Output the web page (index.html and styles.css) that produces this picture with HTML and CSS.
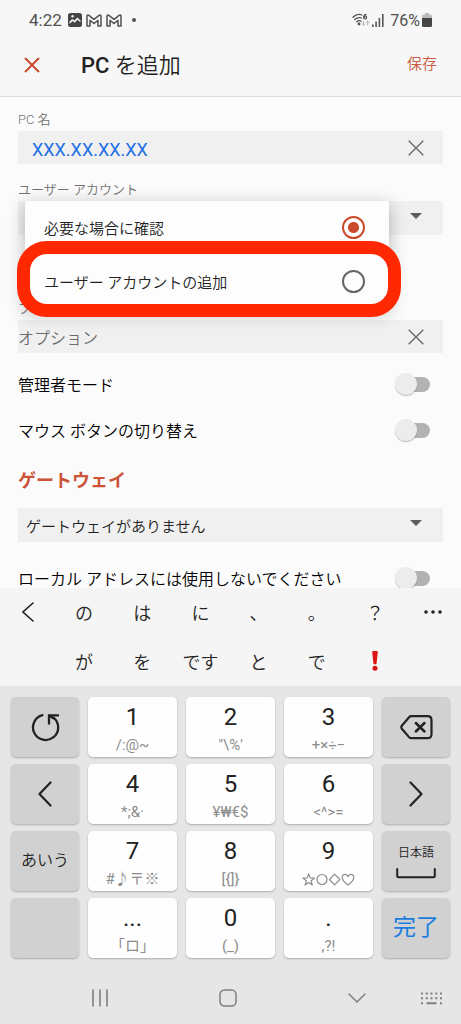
FILE: index.html
```html
<!DOCTYPE html>
<html lang="ja">
<head>
<meta charset="utf-8">
<meta name="viewport" content="width=device-width, initial-scale=1">
<title>PC を追加</title>
<link rel="stylesheet" href="styles.css">
</head>
<body>
<header class="top">
  <div class="status">
    <div class="status-left">
      <span class="clock">4:22</span>
      <svg width="14" height="14" viewBox="0 0 14 14"><rect x="0" y="0" width="14" height="14" rx="2.500" fill="#454545"/><path d="M1.500 11V8.500L4.300 6l2.200 1.600L9.300 4.500l3.200 3v1.700L9.500 6.800 6.700 9.700 4.500 8z" fill="#f7f7f7"/><circle cx="4.500" cy="3.300" r="1.200" fill="#f7f7f7"/></svg>
      <svg width="16" height="13" viewBox="0 0 16 13"><path d="M1 12V2.200Q1 .4 2.600 1.200L8 5.300l5.400-4.100Q15 .4 15 2.200V12h-3V6.400L8 9.500 4 6.400V12z" fill="none" stroke="#505050" stroke-width="1.500" stroke-linejoin="round"/></svg>
      <svg width="16" height="13" viewBox="0 0 16 13"><path d="M1 12V2.200Q1 .4 2.600 1.200L8 5.300l5.400-4.100Q15 .4 15 2.200V12h-3V6.400L8 9.500 4 6.400V12z" fill="none" stroke="#505050" stroke-width="1.500" stroke-linejoin="round"/></svg>
      <span class="dot"></span>
    </div>
    <div class="status-right">
      <svg width="18" height="14" viewBox="0 0 18 14" fill="none" stroke="#555" stroke-width="1.300" stroke-linecap="round"><path d="M1 4.200C3.500 1.600 7 1 10 2M2.800 6.500C5 4.500 7.500 4.200 9.600 5M4.700 8.700c1.500-1.200 3-1.300 4.500-.5"/><circle cx="7" cy="11" r=".8" fill="#555"/><path d="M14 1.500c-1.700.4-2.200 1.800-2.200 3"/><circle cx="13.200" cy="4.500" r="1.400"/><path d="M11.500 8v4m-1.300-1.200l1.300 1.400 1.300-1.400M15.700 12.300v-4m-1.300 1.200l1.300-1.400L17 9.500" stroke="#b5b5b5" stroke-width="1"/></svg>
      <svg width="12" height="13" viewBox="0 0 12 13" fill="#555"><rect x="0" y="10.500" width="1.600" height="2.500"/><rect x="3.300" y="7.500" width="1.600" height="5.500"/><rect x="6.600" y="4" width="1.600" height="9"/><rect x="10" y="0" width="1.600" height="13"/></svg>
      <span class="percent">76%</span>
      <svg width="10" height="14" viewBox="0 0 10 14"><path d="M3 1.500V0h4v1.500h1.500Q10 1.500 10 3v2.500H0V3q0-1.500 1.500-1.500z" fill="#bbb"/><path d="M0 5h10v7.500q0 1.500-1.500 1.500h-7Q0 14 0 12.500z" fill="#454545"/></svg>
    </div>
  </div>
  <div class="toolbar">
    <button class="plain" type="button" aria-label="閉じる"><svg width="16" height="16" viewBox="0 0 16 16"><path d="M1 1l14 14M15 1L1 15" stroke="#cb4a2c" stroke-width="2" fill="none"/></svg></button>
    <h1 class="title"><span class="strong">PC</span> を追加</h1>
    <button class="plain save" type="button">保存</button>
  </div>
</header>

<main class="form">
  <label class="label" for="pc">PC 名</label>
  <div class="field">
    <input class="text host" id="pc" type="text" value="XXX.XX.XX.XX">
    <button class="plain" type="button" aria-label="クリア"><svg width="16" height="16" viewBox="0 0 16 16"><path d="M.7.7l14.600 14.600M15.300.7L.7 15.300" stroke="#6a6a6a" stroke-width="1.400" fill="none"/></svg></button>
  </div>

  <label class="label" for="ask">ユーザー アカウント</label>
  <div class="account">
    <div class="field">
      <svg class="caret" width="12" height="6" viewBox="0 0 12 6"><path d="M0 0h12L6 6z" fill="#5c5c5c"/></svg>
    </div>
    <div class="popup">
      <label class="option">必要な場合に確認<input class="radio" id="ask" type="radio" name="account" checked></label>
      <label class="option marked">ユーザー アカウントの追加<input class="radio" type="radio" name="account"></label>
    </div>
  </div>

  <label class="label" for="nick">フレンドリ名</label>
  <div class="field">
    <input class="text nick" id="nick" type="text" placeholder="オプション">
    <button class="plain" type="button" aria-label="クリア"><svg width="16" height="16" viewBox="0 0 16 16"><path d="M.7.7l14.600 14.600M15.300.7L.7 15.300" stroke="#6a6a6a" stroke-width="1.400" fill="none"/></svg></button>
  </div>

  <div class="switches">
    <label class="switch-row">管理者モード<input class="switch" type="checkbox"></label>
    <label class="switch-row">マウス ボタンの切り替え<input class="switch" type="checkbox"></label>
  </div>

  <h2 class="section">ゲートウェイ</h2>
  <div class="field tall">
    <select class="text select" aria-label="ゲートウェイ"><option>ゲートウェイがありません</option></select>
    <svg class="caret" width="12" height="6" viewBox="0 0 12 6"><path d="M0 0h12L6 6z" fill="#5c5c5c"/></svg>
  </div>
  <div class="switches">
    <label class="switch-row">ローカル アドレスには使用しないでください<input class="switch" type="checkbox"></label>
  </div>
</main>

<section class="keyboard">
  <div class="suggest">
    <button class="plain" type="button" aria-label="戻る"><svg width="12" height="20" viewBox="0 0 12 20"><path d="M11 1L1 10l10 9" stroke="#222" stroke-width="1.600" fill="none" stroke-linecap="round"/></svg></button>
    <button class="plain" type="button">の</button>
    <button class="plain" type="button">は</button>
    <button class="plain" type="button">に</button>
    <button class="plain" type="button">、</button>
    <button class="plain" type="button">。</button>
    <button class="plain" type="button">？</button>
    <button class="plain" type="button" aria-label="その他"><svg width="18" height="4" viewBox="0 0 18 4" fill="#222"><circle cx="2" cy="2" r="1.800"/><circle cx="9" cy="2" r="1.800"/><circle cx="16" cy="2" r="1.800"/></svg></button>
    <span></span>
    <button class="plain" type="button">が</button>
    <button class="plain" type="button">を</button>
    <button class="plain" type="button">です</button>
    <button class="plain" type="button">と</button>
    <button class="plain" type="button">で</button>
    <button class="plain" type="button" aria-label="感嘆符"><svg width="8" height="20" viewBox="0 0 8 20" fill="#dc1414"><path d="M1.200 1Q1.200 0 2.200 0h3.600q1 0 1 1L5.600 12.300q-.1.900-.8.900H3.200q-.7 0-.8-.9z"/><circle cx="4" cy="17.300" r="2.500"/></svg></button>
    <span></span>
  </div>
  <div class="keys">
    <button class="key side" type="button" aria-label="元に戻す"><svg width="29" height="29" viewBox="0 0 29 29" fill="none" stroke="#222" stroke-width="2.300"><path d="M11.500 2.200A12.600 12.600 0 1 0 22.500 4.600" stroke-linecap="round"/><path d="M18 11.500V2.300h10"/><path d="M18 2.300l5 3.500"/></svg></button>
    <button class="key" type="button">1<small class="sub">/:@~</small></button>
    <button class="key" type="button">2<small class="sub">"\%'</small></button>
    <button class="key" type="button">3<small class="sub">+×÷−</small></button>
    <button class="key side" type="button" aria-label="削除"><svg width="33" height="25" viewBox="0 0 33 25" fill="none" stroke="#222" stroke-width="2.200" stroke-linecap="round" stroke-linejoin="round"><path d="M11 1.200h16.500q4 0 4 4v14q0 4-4 4H11q-1 0-1.700-.8l-7.500-8.700q-1-1.500 0-3L9.300 2q.7-.8 1.700-.8z"/><path d="M15.800 8l8.700 8.500m0-8.500l-8.700 8.500" stroke-width="2.500"/></svg></button>

    <button class="key side" type="button" aria-label="左"><svg width="14" height="26" viewBox="0 0 14 26"><path d="M12.500 1.500L1.500 13l11 11.500" stroke="#222" stroke-width="2.200" fill="none" stroke-linecap="round" stroke-linejoin="round"/></svg></button>
    <button class="key" type="button">4<small class="sub">*;&amp;·</small></button>
    <button class="key" type="button">5<small class="sub">¥₩€$</small></button>
    <button class="key" type="button">6<small class="sub">&lt;^&gt;=</small></button>
    <button class="key side" type="button" aria-label="右"><svg width="14" height="26" viewBox="0 0 14 26"><path d="M1.500 1.500L12.500 13l-11 11.500" stroke="#222" stroke-width="2.200" fill="none" stroke-linecap="round" stroke-linejoin="round"/></svg></button>

    <button class="key side kana" type="button">あいう</button>
    <button class="key" type="button">7<small class="sub">#♪〒※</small></button>
    <button class="key" type="button">8<small class="sub">[{]}</small></button>
    <button class="key" type="button">9<small class="sub symbols"><svg width="53" height="13" viewBox="0 0 53 13" fill="none" stroke="#8c8c8c" stroke-width="1.200" stroke-linejoin="round"><path d="M6.700.9l1.500 4 4.300.2-3.400 2.700 1.200 4.200-3.600-2.400-3.600 2.400 1.200-4.200L.9 5.100l4.300-.2z"/><circle cx="20" cy="6.500" r="5"/><path d="M32.600 1.200l5.200 5.300-5.200 5.300-5.200-5.300z"/><path d="M46 12Q40.200 8 40.200 4.600q0-3.200 2.900-3.200 2 0 2.900 2.200.9-2.200 2.900-2.200 2.900 0 2.900 3.200Q51.800 8 46 12z"/></svg></small></button>
    <button class="key side space" type="button">日本語<svg width="40" height="11" viewBox="0 0 40 11"><path d="M1.200 1v6.800q0 1.500 1.500 1.500h34.600q1.500 0 1.500-1.500V1" stroke="#222" stroke-width="2" fill="none" stroke-linecap="round"/></svg></button>

    <button class="key side" type="button" aria-label="空白"></button>
    <button class="key" type="button">...<small class="sub">「ロ」</small></button>
    <button class="key" type="button">0<small class="sub">(_)</small></button>
    <button class="key" type="button">.<small class="sub">,?!</small></button>
    <button class="key side done" type="button">完了</button>
  </div>
  <nav class="nav">
    <span></span>
    <button class="plain" type="button" aria-label="履歴"><svg width="18" height="18" viewBox="0 0 18 18"><path d="M2 .5v17M9 .5v17M16 .5v17" stroke="#808080" stroke-width="1.600"/></svg></button>
    <button class="plain" type="button" aria-label="ホーム"><svg width="18" height="18" viewBox="0 0 18 18"><rect x="1" y="1" width="16" height="16" rx="4.500" fill="none" stroke="#808080" stroke-width="1.500"/></svg></button>
    <button class="plain" type="button" aria-label="閉じる"><svg width="18" height="10" viewBox="0 0 18 10"><path d="M1 1l8 8 8-8" fill="none" stroke="#808080" stroke-width="1.500" stroke-linecap="round"/></svg></button>
    <button class="plain last" type="button" aria-label="キーボード"><svg width="21" height="13" viewBox="0 0 21 13" stroke="#808080" stroke-width="2" fill="none"><path d="M0 1.500h21M0 6.300h21" stroke-dasharray="2 2.750"/><path d="M0 11.200h2M19 11.200h2M5.500 11.200h10"/></svg></button>
  </nav>
</section>
</body>
</html>
```

FILE: styles.css
```css
* { box-sizing: border-box; }

body {
  margin: 0;
  height: 100vh;
  display: flex;
  flex-direction: column;
  overflow: hidden;
  background: #fbfbfb;
  color: #222;
  font-family: Roboto, "Noto Sans CJK JP", sans-serif;
  font-size: 16px;
}

button, input, select { font-family: inherit; color: inherit; margin: 0; }
svg { display: block; flex: none; }

.plain {
  border: 0;
  padding: 0;
  background: none;
  display: flex;
  align-items: center;
  justify-content: center;
}

.top { flex: none; background: #f7f7f7; border-bottom: 1px solid #dcdcdc; }

.status {
  height: 40px;
  padding: 0 29px;
  display: flex;
  align-items: center;
  justify-content: space-between;
  color: #505050;
  font-size: 17px;
}
.status-left, .status-right { display: flex; align-items: center; gap: 4px; }
.clock { margin-right: 2px; }
.status-right { gap: 2px; }
.percent { margin-left: 4px; font-size: 16px; }
.dot { width: 4px; height: 4px; margin-left: 6px; border-radius: 50%; background: #505050; }

.toolbar { display: flex; align-items: center; height: 56px; padding: 0 24px 6px; }
.title { flex: 1; margin: 2px 0 0 41px; font-size: 22px; line-height: 30px; font-weight: 350; }
.strong { font-weight: 500; }
.save { color: #cb5a40; font-size: 15px; line-height: 20px; padding-bottom: 2px; font-weight: 350; }

.form { flex: 1; min-height: 0; overflow: hidden; padding: 15px 18px 0; font-weight: 350; }
.label { display: block; margin-bottom: 3px; font-size: 13px; line-height: 16px; color: #747474; }
.field {
  display: flex;
  align-items: center;
  height: 33px;
  margin-bottom: 18px;
  padding-right: 19px;
  background: #f0f0f0;
}
.field .caret { margin: 0 2px 4px auto; }
.text {
  flex: 1;
  min-width: 0;
  height: 100%;
  padding: 0;
  border: 0;
  outline: 0;
  background: none;
  font-size: 16px;
  font-weight: 350;
}
.text::placeholder { color: #6c6c6c; opacity: 1; }
.host { padding: 3px 0 0 14px; font-size: 18px; font-weight: 400; color: #1f6fe5; }
.nick { padding-top: 3px; }
.select { appearance: none; padding: 3px 0 0 8px; font-size: 15px; color: #222; }

.account { position: relative; height: 100px; }
.account .field { height: 34px; }
.popup {
  position: absolute;
  z-index: 1;
  top: 0;
  left: 7px;
  right: 54px;
  border-radius: 2px;
  background: #fdfdfd;
  box-shadow: 0 4px 18px rgba(0, 0, 0, .28);
}
.option {
  position: relative;
  display: flex;
  align-items: center;
  justify-content: space-between;
  height: 54px;
  padding: 0 24px 2px 19px;
  font-size: 15px;
}
.marked::after {
  content: "";
  position: absolute;
  inset: -14px -12px -8px -8px;
  border: 13px solid #ff2800;
  border-radius: 30px;
  pointer-events: none;
}
.radio {
  appearance: none;
  width: 23px;
  height: 23px;
  border: 2px solid #666;
  border-radius: 50%;
}
.radio:checked {
  border-color: #cb4a2c;
  background: radial-gradient(circle, #cb4a2c 5px, transparent 6px);
}

.switches { margin-top: -10px; }
.switch-row {
  display: flex;
  align-items: center;
  justify-content: space-between;
  height: 46px;
  padding-right: 13px;
  color: #000;
}
.switch {
  appearance: none;
  position: relative;
  width: 30px;
  height: 15px;
  border-radius: 8px;
  background: #b2b2b2;
}
.switch::before {
  content: "";
  position: absolute;
  top: -4px;
  left: -5px;
  width: 22px;
  height: 22px;
  border-radius: 50%;
  background: #ececec;
  box-shadow: 0 1px 1px rgba(0, 0, 0, .25);
}

.section { margin: 16px 0 15px; font-size: 18px; line-height: 24px; font-weight: 700; color: #cb5438; }
.tall { height: 34px; margin-bottom: 23px; }

.keyboard { flex: none; background: #e6e6e6; }
.suggest {
  display: grid;
  grid-template-columns: 55px repeat(6, 1fr) 57px;
  grid-auto-rows: 49px;
  background: #f5f5f5;
}
.suggest .plain { padding-bottom: 2px; font-size: 18px; font-weight: 350; }

.keys {
  display: grid;
  grid-template-columns: 68fr repeat(3, 89fr) 68fr;
  grid-auto-rows: 60px;
  gap: 7px 9px;
  padding: 11px 11px 14px;
}
.key {
  display: flex;
  flex-direction: column;
  align-items: center;
  gap: 4px;
  padding: 6px 0 2px;
  border: 0;
  border-radius: 5px;
  background: #fefefe;
  box-shadow: 0 1px 2px rgba(0, 0, 0, .25);
  font-size: 24px;
  line-height: 28px;
}
.sub { font-size: 15px; line-height: 20px; color: #8c8c8c; }
.symbols { padding-top: 4px; }
.side { justify-content: center; padding: 0; background: #d1d1d1; }
.kana { font-size: 16px; font-weight: 350; }
.space { gap: 6px; font-size: 12px; line-height: 18px; font-weight: 350; }
.done { font-size: 23px; color: #1a7de0; }

.nav { display: grid; grid-template-columns: 36px repeat(3, 1fr) 40px; height: 52px; }
.last { justify-content: flex-start; }
```
